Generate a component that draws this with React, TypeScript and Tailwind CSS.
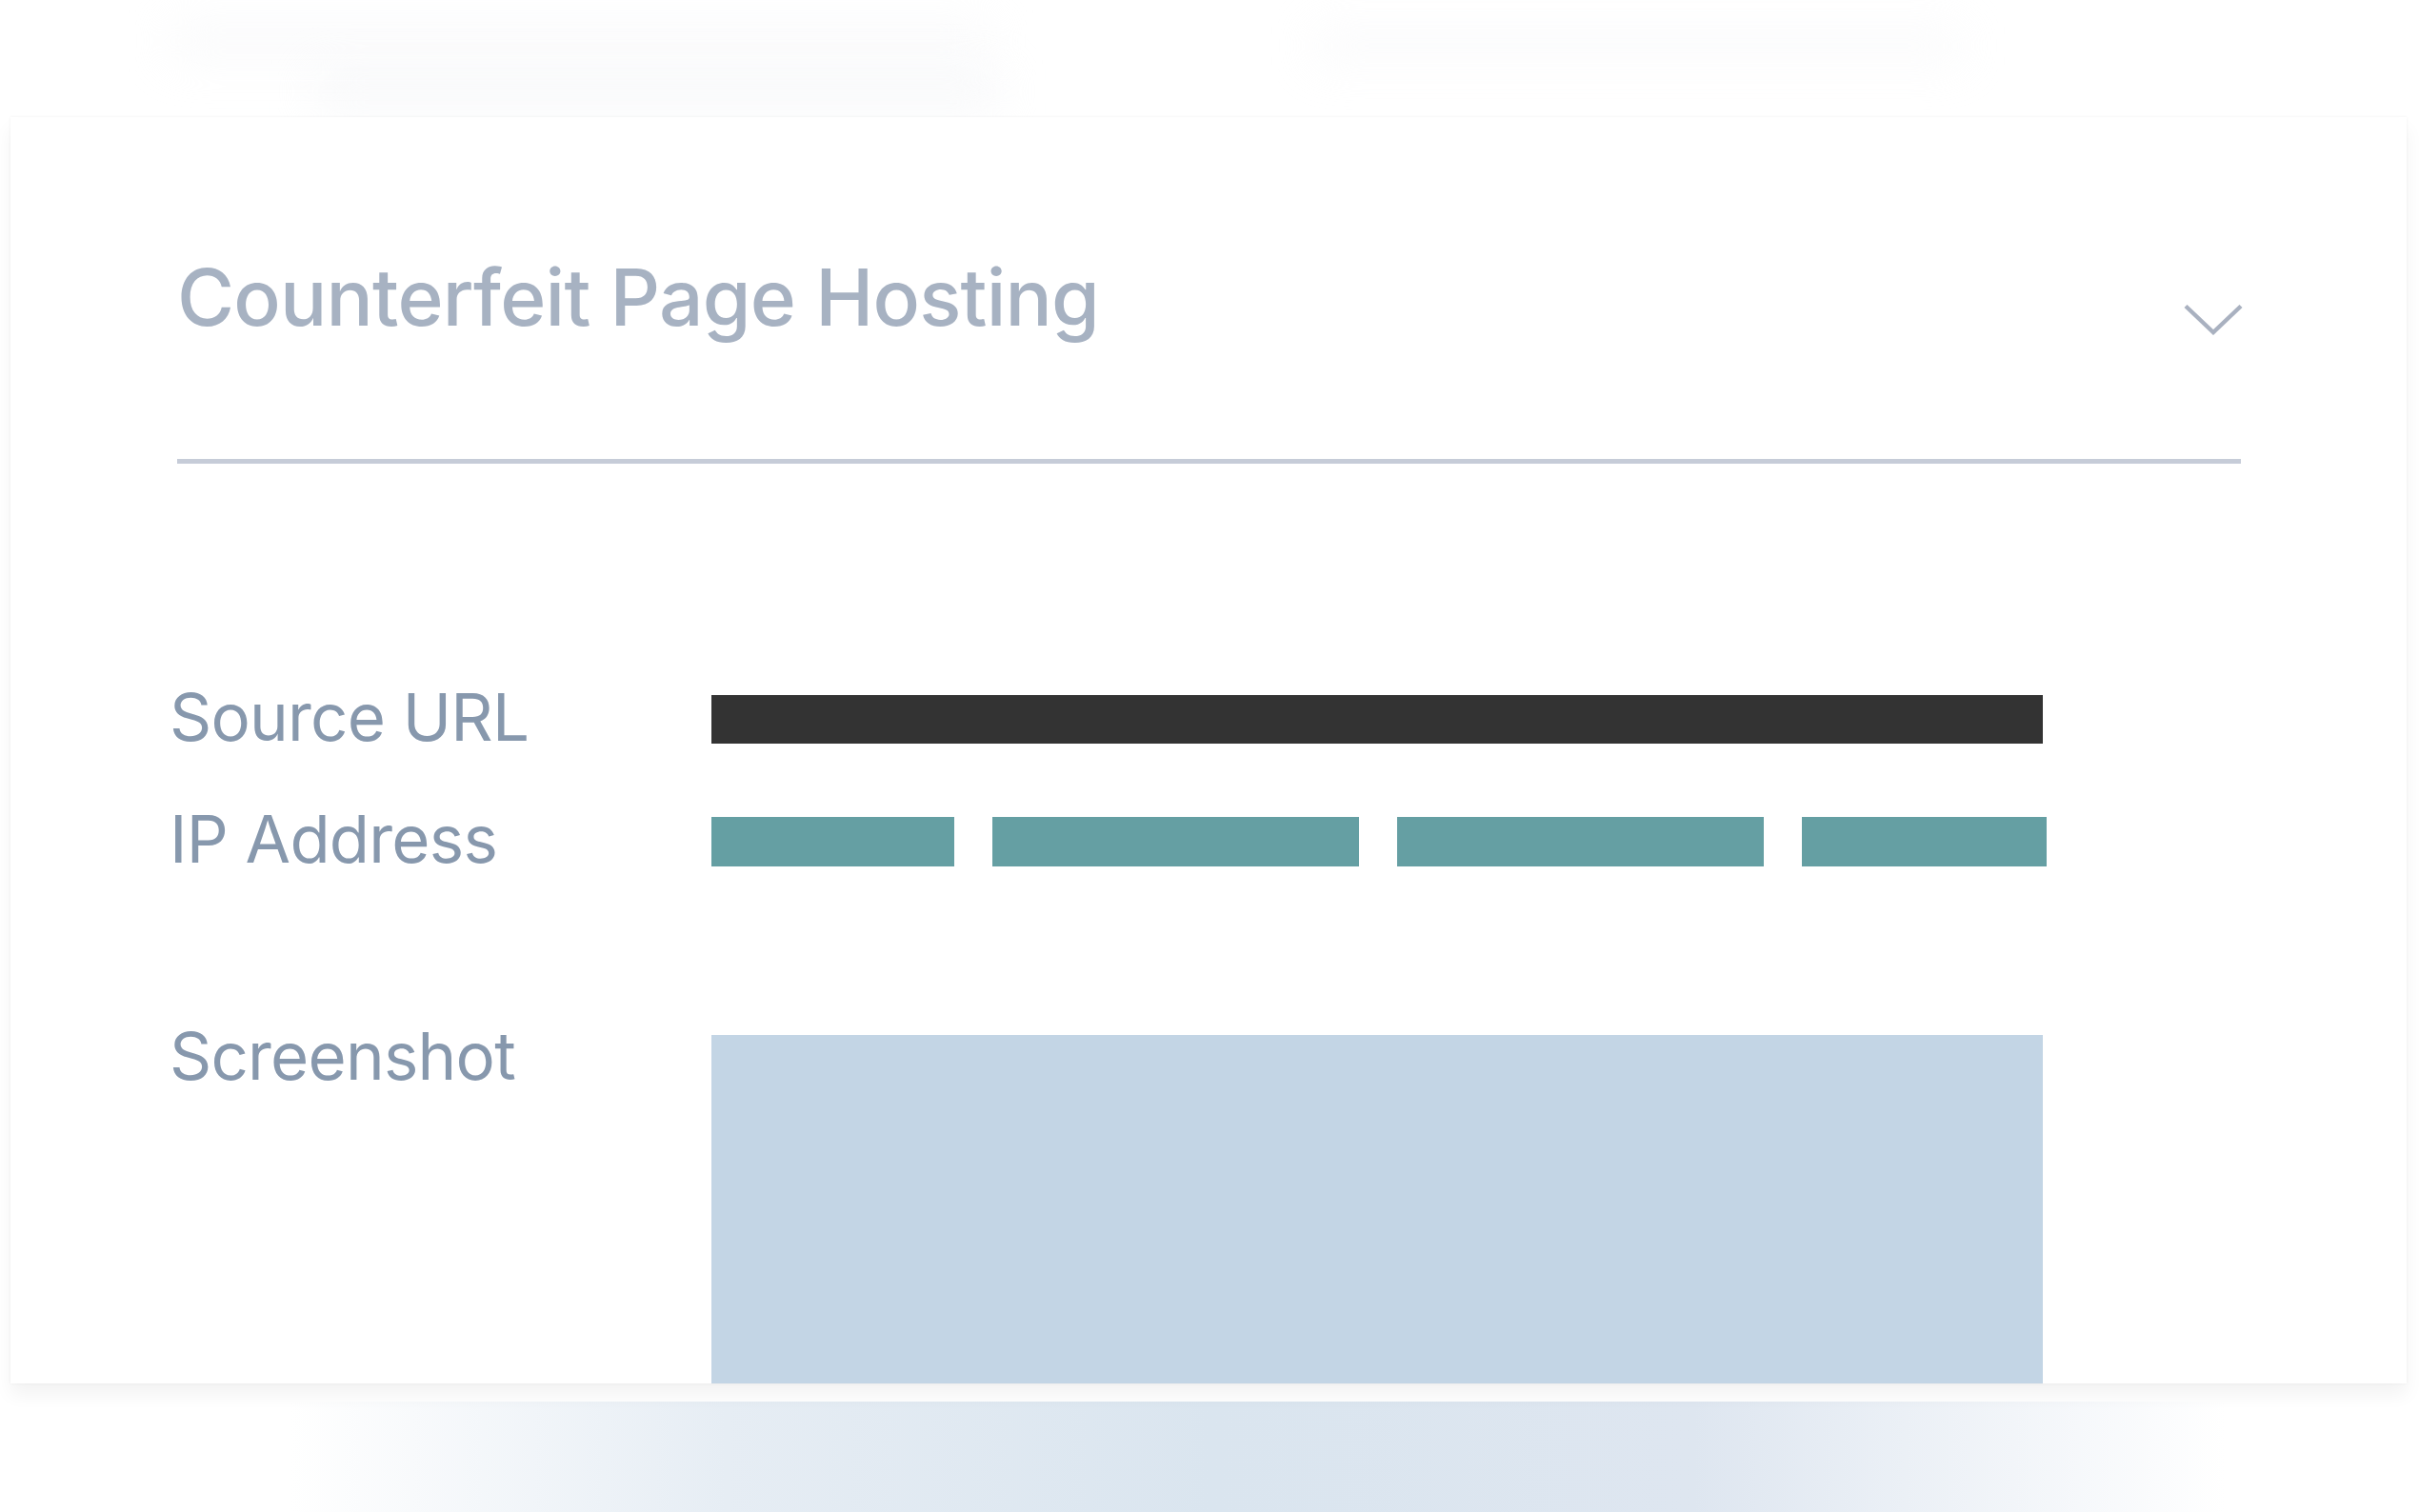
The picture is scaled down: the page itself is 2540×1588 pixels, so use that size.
import React from 'react';

const ipSegments = [255, 385, 385, 257];

function Chevron() {
  return (
    <svg
      width="62"
      height="33"
      viewBox="0 0 62 33"
      fill="none"
      className="mt-[47px] -mr-[2px] shrink-0"
    >
      <polyline
        points="2,2.5 31,30 60,2.5"
        stroke="#a9b1c0"
        strokeWidth="4.4"
        strokeLinejoin="miter"
      />
    </svg>
  );
}

function Row({ label, children, className = '' }: { label: string; children: React.ReactNode; className?: string }) {
  return (
    <div className={`grid grid-cols-[569px_1fr] items-start ${className}`}>
      <span className="text-[69px] leading-[51px] -mt-[2px] text-[#8798ad] tracking-[-0.8px]">{label}</span>
      {children}
    </div>
  );
}

export default function App() {
  return (
    <div
      className="relative h-[1588px] w-full overflow-hidden bg-white"
      style={{ fontFamily: 'Inter, "Liberation Sans", sans-serif' }}
    >
      {/* blurred page content peeking above the card */}
      <div className="absolute left-[180px] top-[25px] h-[36px] w-[860px] bg-[#f4f5f7] opacity-50 blur-xl" />
      <div className="absolute left-[330px] top-[78px] h-[36px] w-[720px] bg-[#eff1f4] opacity-50 blur-xl" />
      <div className="absolute left-[1380px] top-[30px] h-[36px] w-[680px] bg-[#f4f5f7] opacity-40 blur-xl" />

      <div className="relative ml-[11px] mt-[123px] h-[1330px] w-[2516px] overflow-hidden bg-white shadow-[0_0_3px_rgba(0,0,0,0.06),0_12px_18px_rgba(0,0,0,0.05)]">
        <div className="pl-[175px] pr-[174px] pt-[149px]">
          <div className="flex items-start justify-between">
            <h1 className="text-[82px] font-medium leading-none tracking-[-0.8px] text-[#a7b2c2]">
              Counterfeit Page Hosting
            </h1>
            <Chevron />
          </div>
          <div className="mt-[128px] h-[5px] bg-[#c6ccd8]" />
        </div>

        <div className="pl-[167px] pt-[243px]">
          <Row label="Source URL">
            <div className="h-[51px] w-[1398px] bg-[#333333]" />
          </Row>

          <Row label="IP Address" className="mt-[77px]">
            <div className="flex h-[52px] gap-[40px]">
              {ipSegments.map((w, i) => (
                <div key={i} className="h-full bg-[#659fa3]" style={{ width: w }} />
              ))}
            </div>
          </Row>

          <div className="mt-[177px] grid grid-cols-[569px_1fr] items-start">
            <span className="-mt-[12px] text-[69px] leading-none tracking-[-0.8px] text-[#8798ad]">Screenshot</span>
            <div className="h-[366px] w-[1398px] bg-[#c3d5e5]" />
          </div>
        </div>
      </div>

      {/* soft backdrop below the card */}
      <div className="mt-[19px] h-[120px] w-full bg-[linear-gradient(90deg,#ffffff_12%,#e6edf4_30%,#dae5ef_50%,#dee6f0_70%,#ffffff_92%)]" />
    </div>
  );
}
